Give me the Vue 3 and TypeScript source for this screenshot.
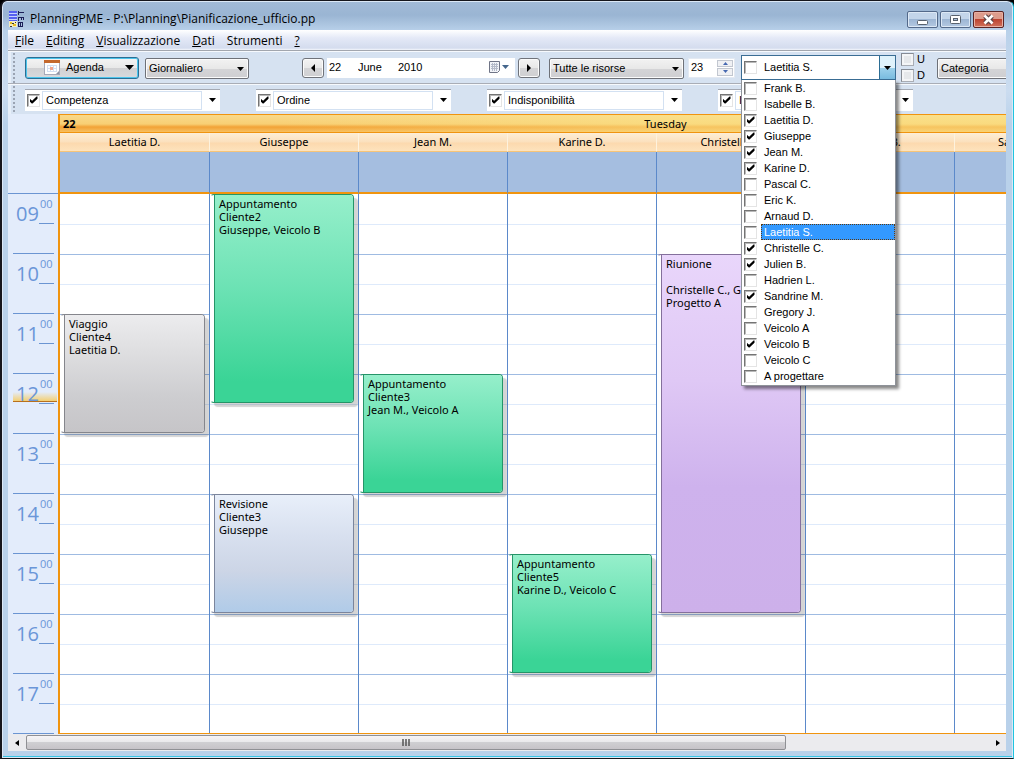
<script setup lang="ts">
import { ref } from 'vue'

interface Resource { name: string; checked: boolean }
interface Appointment { resource: string; start: number; end: number; tone: string; lines: string[] }

const FIRST_HOUR = 9
const hours = ['09', '10', '11', '12', '13', '14', '15', '16', '17']

const menus = [
  { key: 'F', rest: 'ile' },
  { key: 'E', rest: 'diting' },
  { key: 'V', rest: 'isualizzazione' },
  { key: 'D', rest: 'ati' },
  { key: '', rest: 'Strumenti' },
  { key: '?', rest: '' },
]

const filters = ref([
  { id: 'skill', name: 'Competenza', on: true },
  { id: 'order', name: 'Ordine', on: true },
  { id: 'absence', name: 'Indisponibilità', on: true },
  { id: 'label', name: 'Intestazione', on: true },
])

const resources = ref<Resource[]>([
  { name: 'Frank B.', checked: false },
  { name: 'Isabelle B.', checked: false },
  { name: 'Laetitia D.', checked: true },
  { name: 'Giuseppe', checked: true },
  { name: 'Jean M.', checked: true },
  { name: 'Karine D.', checked: true },
  { name: 'Pascal C.', checked: false },
  { name: 'Eric K.', checked: false },
  { name: 'Arnaud D.', checked: false },
  { name: 'Laetitia S.', checked: false },
  { name: 'Christelle C.', checked: true },
  { name: 'Julien B.', checked: true },
  { name: 'Hadrien L.', checked: false },
  { name: 'Sandrine M.', checked: true },
  { name: 'Gregory J.', checked: false },
  { name: 'Veicolo A', checked: false },
  { name: 'Veicolo B', checked: true },
  { name: 'Veicolo C', checked: false },
  { name: 'A progettare', checked: false },
])
const current = ref('Laetitia S.')
const open = ref(true)

const columns = ['Laetitia D.', 'Giuseppe', 'Jean M.', 'Karine D.', 'Christelle C.', 'Julien B.', 'Sandrine M.', 'Veicolo B']

const appointments: Appointment[] = [
  { resource: 'Laetitia D.', start: 11, end: 13, tone: 'grey', lines: ['Viaggio', 'Cliente4', 'Laetitia D.'] },
  { resource: 'Giuseppe', start: 9, end: 12.5, tone: 'green', lines: ['Appuntamento', 'Cliente2', 'Giuseppe, Veicolo B'] },
  { resource: 'Giuseppe', start: 14, end: 16, tone: 'blue', lines: ['Revisione', 'Cliente3', 'Giuseppe'] },
  { resource: 'Jean M.', start: 12, end: 14, tone: 'green', lines: ['Appuntamento', 'Cliente3', 'Jean M., Veicolo A'] },
  { resource: 'Karine D.', start: 15, end: 17, tone: 'green', lines: ['Appuntamento', 'Cliente5', 'Karine D., Veicolo C'] },
  { resource: 'Christelle C.', start: 10, end: 16, tone: 'violet', lines: ['Riunione', '', 'Christelle C., Giuseppe', 'Progetto A'] },
]

const forResource = (name: string) => appointments.filter((a) => a.resource === name)
const rowSpan = (a: Appointment) => ({
  gridRow: `${(a.start - FIRST_HOUR) * 2 + 1} / ${(a.end - FIRST_HOUR) * 2 + 1}`,
})
</script>

<template>
  <div class="window">
    <header class="title-bar">
      <svg class="app-icon" width="16" height="17" viewBox="0 0 16 17" aria-hidden="true">
        <rect x="0" y="0" width="8" height="10" fill="#5560f0" />
        <path d="M0 2.5h8M0 5.5h8M0 8.5h8" stroke="#c8d4ff" />
        <rect x="0" y="10" width="8" height="6" fill="#f4ecc0" />
        <path d="M1 11h2v2H1zM4 13h3v2H4z" fill="#e8c020" />
        <path d="M3 12h2v1H3zM1 15h2v1H1zM6 11h1v1H6z" fill="#333" />
        <path d="M9.5 0v4M9 1.5h6M9.5 6v4M9 6.5h5M14.5 6v3M12.500 6v3M9 11.500h5M9.500 11v5M11.500 11v5M13.500 11v5M9 15.500h5" fill="none" stroke="#1c1f58" />
      </svg>
      <h1>PlanningPME - P:\Planning\Pianificazione_ufficio.pp</h1>
      <div class="window-buttons">
        <button type="button" aria-label="Riduci">
          <svg width="29" height="15" viewBox="0 0 29 15"><rect x="9.500" y="8.500" width="10" height="4" rx="1" fill="#fff" stroke="#59626e" /></svg>
        </button>
        <button type="button" aria-label="Ingrandisci">
          <svg width="29" height="15" viewBox="0 0 29 15"><rect x="9.500" y="3.500" width="10" height="8" rx="1" fill="#fff" stroke="#59626e" /><rect x="12.500" y="6.500" width="4" height="2" fill="#a9c0dc" stroke="#59626e" /></svg>
        </button>
        <button type="button" class="close" aria-label="Chiudi">
          <svg width="29" height="15" viewBox="0 0 29 15"><path d="M11 4l7 7M18 4l-7 7" stroke="#5b4548" stroke-width="5" /><path d="M10.500 3.500l8 8M18.500 3.500l-8 8" stroke="#fff" stroke-width="2.500" /></svg>
        </button>
      </div>
    </header>

    <div class="client">
      <nav class="menu-bar">
        <a v-for="m in menus" :key="m.key + m.rest" href="#"><u>{{ m.key }}</u>{{ m.rest }}</a>
      </nav>

      <div class="toolbar">
        <span class="grip"></span>
        <button type="button" class="agenda">
          <svg width="16" height="15" viewBox="0 0 16 15" aria-hidden="true">
            <rect x=".5" y=".5" width="15" height="14" fill="#fff" stroke="#a7a9b8" />
            <rect x="0" y="0" width="16" height="3" fill="#c4682c" />
            <path d="M3.500 5v7M6.500 5v7M9.500 5v7M12.500 5v7M3 5.500h10M3 8.500h10M3 11.500h10" stroke="#d3dff2" />
            <rect x="6" y="7" width="3" height="3" fill="#f3a48c" />
            <path d="M12 14l3-3v3z" fill="#8f93a3" />
          </svg>
          <span>Agenda</span>
          <svg class="wide-arrow" width="9" height="5" viewBox="0 0 9 5" aria-hidden="true"><path d="M0 0h9L4.500 5z" /></svg>
        </button>
        <div class="drop period">
          <select aria-label="Periodo"><option>Giornaliero</option></select>
          <svg width="7" height="4" viewBox="0 0 7 4" aria-hidden="true"><path d="M0 0h7L3.500 4z" /></svg>
        </div>
        <div class="date-nav">
          <button type="button" class="step" aria-label="Giorno precedente">
            <svg width="4" height="8" viewBox="0 0 4 8"><path d="M4 0v8L0 4z" /></svg>
          </button>
          <div class="date-field">
            <input class="day" aria-label="Giorno" value="22" />
            <input class="month" aria-label="Mese" value="June" />
            <input class="year" aria-label="Anno" value="2010" />
            <button type="button" aria-label="Apri calendario">
              <svg width="20" height="13" viewBox="0 0 20 13">
                <path d="M.5 .5h10v9l-2 2h-8z" fill="#f1f3f8" stroke="#6f7486" />
                <path d="M2 3.500h7M2 5.500h7M2 7.500h7M3.500 2v8M5.500 2v8M7.500 2v8" stroke="#b4bac9" />
                <path d="M13 4h7l-3.500 4z" fill="#44668c" />
              </svg>
            </button>
          </div>
          <button type="button" class="step" aria-label="Giorno successivo">
            <svg width="4" height="8" viewBox="0 0 4 8"><path d="M0 0v8l4-4z" /></svg>
          </button>
        </div>
        <div class="drop scope">
          <select aria-label="Risorse"><option>Tutte le risorse</option></select>
          <svg width="7" height="4" viewBox="0 0 7 4" aria-hidden="true"><path d="M0 0h7L3.500 4z" /></svg>
        </div>
        <div class="spinner">
          <input aria-label="Numero" value="23" />
          <span>
            <button type="button" aria-label="Aumenta"><svg width="5" height="3" viewBox="0 0 5 3"><path d="M0 3h5L2.500 0z" /></svg></button>
            <button type="button" aria-label="Diminuisci"><svg width="5" height="3" viewBox="0 0 5 3"><path d="M0 0h5L2.500 3z" /></svg></button>
          </span>
        </div>
        <div class="combo">
          <input type="checkbox" class="tick" aria-label="Seleziona risorsa" />
          <input type="text" class="combo-text" aria-label="Risorsa" :value="current" />
          <button type="button" aria-label="Elenco risorse" @click="open = !open">
            <svg width="7" height="4" viewBox="0 0 7 4"><path d="M0 0h7L3.500 4z" /></svg>
          </button>
          <ul v-if="open" class="resource-list">
            <li v-for="r in resources" :key="r.name">
              <label :class="{ active: r.name === current }">
                <input v-model="r.checked" type="checkbox" class="tick" />
                <span>{{ r.name }}</span>
              </label>
            </li>
          </ul>
        </div>
        <div class="flags">
          <label><input type="checkbox" class="tick dim" />U</label>
          <label><input type="checkbox" class="tick dim" />D</label>
        </div>
        <div class="drop category">
          <select aria-label="Categoria"><option>Categoria</option></select>
        </div>
      </div>

      <div class="toolbar filters">
        <span class="grip"></span>
        <div class="filter-set">
          <div v-for="f in filters" :key="f.id" class="filter">
            <input v-model="f.on" type="checkbox" class="tick" :aria-label="'Attiva ' + f.name" />
            <input type="text" :aria-label="f.name" :value="f.name" />
            <button type="button" :aria-label="'Apri ' + f.name">
              <svg width="7" height="4" viewBox="0 0 7 4"><path d="M0 0h7L3.500 4z" /></svg>
            </button>
          </div>
        </div>
      </div>

      <main class="calendar">
        <div class="gutter">
          <div class="gutter-head"></div>
          <div class="hours">
            <i class="now"></i>
            <div v-for="h in hours" :key="h" class="hour"><span>{{ h }}</span><sup>00</sup></div>
          </div>
        </div>
        <div class="board">
          <div class="day-head"><b>22</b><span>Tuesday</span></div>
          <div class="columns">
            <section v-for="c in columns" :key="c" class="column">
              <h2>{{ c }}</h2>
              <div class="all-day"></div>
              <div class="slots">
                <article v-for="a in forResource(c)" :key="a.start" class="appointment" :class="a.tone" :style="rowSpan(a)">
                  <div class="body">
                    <p v-for="(l, i) in a.lines" :key="i">{{ l }}</p>
                  </div>
                </article>
              </div>
            </section>
          </div>
        </div>
      </main>

      <div class="scrollbar">
        <button type="button" aria-label="Scorri a sinistra"><svg width="4" height="6" viewBox="0 0 4 6"><path d="M4 0v6L0 3z" /></svg></button>
        <div class="track">
          <div class="thumb"><svg width="8" height="7" viewBox="0 0 8 7"><path d="M1 0v7M4 0v7M7 0v7" stroke="#555" stroke-width="1.500" /></svg></div>
        </div>
        <button type="button" aria-label="Scorri a destra"><svg width="4" height="6" viewBox="0 0 4 6"><path d="M0 0v6l4-3z" /></svg></button>
      </div>
    </div>
  </div>
</template>

<style>
html, body { background: #000; }
</style>

<style scoped>
* { box-sizing: border-box; }
button, input, select { font: inherit; color: inherit; margin: 0; padding: 0; border: 0; background: none; border-radius: 0; outline: 0; }
button { display: flex; align-items: center; justify-content: center; }
svg { display: block; flex: none; }
h1, h2, p, ul { margin: 0; padding: 0; font-weight: normal; list-style: none; }

.window {
  min-height: 100vh;
  padding: 1px 7px 7px 6px;
  border: 1px solid #16161c;
  border-right-color: #20c4e0;
  border-left-width: 2px;
  border-radius: 7px 7px 0 0;
  background: linear-gradient(#a3bbd8, #9ab5d3 14px, #b9d1ea 30px, #cbdcf0 90px, #b9d1ea 124px);
  box-shadow: inset 0 0 0 1px #dce8f6, inset 0 -2px 0 #38c4e4;
  font: 11px/13px "Liberation Sans", Arial, sans-serif;
  color: #000;
  overflow: hidden;
}
.title-bar { display: flex; height: 28px; align-items: center; padding: 6px 2px 0 1px; font-family: "Open Sans", "Noto Sans", sans-serif; }
.title-bar h1 { flex: 1; margin-left: 5px; font-size: 12px; line-height: 18px; white-space: nowrap; }
.window-buttons { display: flex; gap: 2px; }
.window-buttons button { width: 31px; height: 17px; border: 1px solid #53698a; border-radius: 2px; background: linear-gradient(#c3d5ea 45%, #9db6d4 50%, #b4c9e2); box-shadow: inset 0 0 0 1px #dce8f5; }
.window-buttons .close { border-color: #5a2424; background: linear-gradient(#dd9c8c 45%, #bd4431 50%, #d0725c); box-shadow: inset 0 0 0 1px #e8b0a4; }

.client { background: #d6e2f1; overflow: hidden; }
.menu-bar { display: flex; gap: 12px; height: 21px; padding: 1px 7px; border-bottom: 1px solid #a2a6ae; background: linear-gradient(#fff, #e4e9f7 8px, #d4dcee 18px, #f4f7fc); font: 12px/19px "Open Sans", "Noto Sans", sans-serif; }
.menu-bar a { color: #000; text-decoration: none; }

.toolbar { position: relative; z-index: 2; display: flex; align-items: center; height: 33px; padding-top: 1px; border-bottom: 1px solid #a9adb6; background: #d6e2f1; box-shadow: inset 0 1px #f6f9fd; }
.filters { z-index: 1; height: 30px; border-bottom: 0; }
.grip { flex: none; align-self: stretch; width: 10px; margin-right: 7px; border-left: 3px solid #e7eff9; background: radial-gradient(circle at 2px 2px, #9aa3b2 1px, #d6e2f1 1px) 1px 0 / 4px 4px repeat-y; }

.agenda { width: 114px; height: 22px; flex: none; justify-content: flex-start; padding: 0 4px 0 18px; border: 1px solid #2b6f94; border-radius: 3px; background: linear-gradient(#f4f4f4, #e8e8e8 50%, #d0d0d2 50%, #d8dade); box-shadow: inset 0 0 0 1px #4cc4ec; }
.agenda span { flex: 1; margin-left: 6px; text-align: left; }
.drop { position: relative; flex: none; }
.drop select { appearance: none; display: block; width: 100%; height: 21px; padding: 0 3px; border: 1px solid #6e7178; border-radius: 2px; background: linear-gradient(#f2f2f2, #e8e8e8 50%, #d4d4d6 50%, #cfcfd2); box-shadow: inset 0 0 0 1px #fbfbfb; }
.drop svg { position: absolute; right: 5px; top: 9px; pointer-events: none; }
.period { width: 104px; margin: 1px 0 0 6px; }
.scope { width: 135px; margin: 1px 0 0 9px; }
.category { width: 104px; margin: 1px 0 0 6px; }

.date-nav { display: flex; gap: 3px; margin-left: 53px; }
.step { width: 22px; height: 20px; border: 1px solid #70737a; border-radius: 3px; background: linear-gradient(#f3f3f3, #e8e8e8 50%, #d4d4d6 50%, #d0d0d3); box-shadow: inset 0 0 0 1px #fbfbfb; }
.date-field { display: flex; align-items: center; width: 188px; height: 20px; padding: 0 6px 0 2px; background: #fff; }
.date-field .day { width: 29px; }
.date-field .month { width: 40px; }
.date-field .year { flex: 1; min-width: 0; }

.spinner { display: flex; width: 47px; height: 20px; flex: none; margin-left: 4px; padding: 1px; background: #fff; border: 1px solid #e3e9f2; }
.spinner input { flex: 1; min-width: 0; padding-left: 1px; }
.spinner span { display: grid; width: 16px; gap: 1px; }
.spinner button { border: 1px solid #c2c7d0; background: #f0f1f4; }
.spinner svg { fill: #4668b0; }

.tick { appearance: none; flex: none; width: 13px; height: 13px; border: 1px solid; border-color: #747474 #e4e4e4 #e4e4e4 #747474; background: #fff; box-shadow: inset 1px 1px #b8b8b8; }
.tick:checked { display: grid; place-items: center; }
.tick:checked::before { content: ""; width: 8px; height: 8px; background: #000; clip-path: polygon(0 30%, 33% 60%, 88% 5%, 100% 5%, 100% 35%, 38% 95%, 28% 95%, 0 65%); }
.tick.dim { border-color: #868b94 #a9adb5 #a9adb5 #868b94; background: #e6e8eb; box-shadow: inset 0 0 0 2px #f4f5f7; }

.combo { position: relative; display: flex; align-items: center; width: 155px; height: 25px; flex: none; margin-left: 6px; padding-left: 2px; border: 1px solid #3a6d94; background: #fff; }
.combo-text { flex: 1; min-width: 0; margin-left: 7px; }
.combo > button { align-self: stretch; width: 16px; border-left: 1px solid #2b6d94; background: linear-gradient(#dff2fb 50%, #9fd2ec 50%, #78bbdf); }
.resource-list { position: absolute; z-index: 5; left: -1px; right: -1px; top: 24px; padding-bottom: 1px; border: 1px solid #8e9299; border-top: 0; background: #fff; box-shadow: 3px 3px 3px #0007; }
.resource-list label { display: flex; align-items: center; height: 16px; padding-left: 2px; }
.resource-list span { flex: 1; margin-left: 4px; padding: 0 2px; border: 1px solid #fff; line-height: 14px; }
.resource-list .active span { border: 1px dotted #5c3a14; background: #3399ff; color: #fff; }

.flags { display: grid; gap: 1px; width: 30px; flex: none; margin-left: 5px; }
.flags label { display: flex; align-items: center; gap: 3px; height: 15px; line-height: 15px; }

.filter-set { display: flex; gap: 36px; }
.filter { display: flex; align-items: center; width: 195px; height: 22px; flex: none; padding: 1px 0 1px 2px; background: #fff; border-top: 1px solid #a4a9b3; }
.filter input[type="text"] { flex: 1; min-width: 0; align-self: stretch; margin-left: 2px; padding-left: 3px; border: 1px solid #d3e1f2; }
.filter button { width: 18px; padding-left: 3px; align-self: stretch; }

.calendar { display: flex; background: #e3ecfb; font-family: "Noto Sans", "Open Sans", sans-serif; }
.gutter { width: 50px; flex: none; }
.gutter-head { height: 79px; }
.hours { position: relative; padding: 0 4px 0 5px; border-top: 1px solid #6b95d2; }
.hour { position: relative; display: flex; height: 60px; padding-left: 3px; color: #6a96d8; border-bottom: 1px solid #6b95d2; background: linear-gradient(#6b95d2, #6b95d2) right 29px / 15px 1px no-repeat; }
.hour span { padding-top: 8px; font: 20px/24px "Open Sans", "Noto Sans", sans-serif; }
.hour sup { padding: 3px 0 0 1px; font: 11px/14px "Open Sans", "Noto Sans", sans-serif; }
.now { position: absolute; left: 5px; right: 1px; top: 198px; height: 10px; border-bottom: 1px solid #b8701c; background: linear-gradient(#f8d88000, #f8c850cc); }

.board { flex: 1; min-width: 0; overflow: hidden; border: solid #f0940f; border-width: 1px 0 1px 2px; background: #fff; }
.day-head { display: grid; grid-template-columns: 1fr auto 1fr; width: 1208px; height: 18px; padding-left: 3px; line-height: 17px; border-bottom: 1px solid #f0940f; background: linear-gradient(90deg, #fbe68a00, #fbe68a00 220px, #fbe68a80 600px), linear-gradient(#f9d98a, #f8cf74 9px, #f2a236 12px, #f7c060); }
.columns { display: flex; }
.column { flex: 0 0 149px; }
.column:first-child { flex-basis: 150px; }
.column h2 { height: 19px; border-right: 1px solid #fdf2de; border-bottom: 1px solid #f6c478; background: linear-gradient(#fdeed6, #fbe0bd 9px, #fcd9ae 10px, #fde3bd); font-size: 11px; line-height: 18px; text-align: center; }
.all-day { height: 42px; border-right: 1px solid #5b89ca; border-bottom: 2px solid #f0940f; background: #a5bee0; }
.slots {
  display: grid;
  grid-template-rows: repeat(18, 30px);
  margin-bottom: -1px;
  padding-right: 4px;
  border-right: 1px solid #5b89ca;
  background:
    linear-gradient(#fff, #fff) 0 0 / 100% 1px no-repeat,
    linear-gradient(#9fbbe2 0 1px, #fff 1px 30px, #deeafb 30px 31px, #fff 31px 60px) 0 0 / 100% 60px;
}

.appointment { margin: 0 0 1px; padding-left: 3px; border: 1px solid var(--edge); border-left-color: #fff; border-radius: 4px; background: #fff; box-shadow: 4px 4px 1px #0000002b; }
.body { height: 100%; padding: 2px 4px; border-left: 1px solid var(--edge); border-radius: 0 3px 3px 0; line-height: 13px; overflow: hidden; white-space: nowrap; }
.body p { min-height: 13px; }
.green { --edge: #259468; }
.green .body { background: linear-gradient(#96efcb, #6ce2b4 45%, #3ad496 90%); }
.grey { --edge: #85868c; }
.grey .body { background: linear-gradient(#ececee, #dfdfe1 30%, #cdcdd0 70%, #c6c5c8); }
.blue { --edge: #7b859c; }
.blue .body { background: linear-gradient(#e8effa, #d8e0ef 35%, #ccd5e6 65%, #b0cbe8); }
.violet { --edge: #84709c; }
.violet .body { background: linear-gradient(#e9d6fb, #dfc8f5 35%, #ceb2ed 65%, #cdb0ea); }

.scrollbar { display: flex; height: 17px; background: #ebebee; }
.scrollbar > button { width: 17px; }
.track { flex: 1; display: flex; padding: 1px; }
.thumb { display: flex; width: 79%; align-items: center; justify-content: center; border: 1px solid #8f9094; border-radius: 2px; background: linear-gradient(#f6f4f6, #e8e8ea 50%, #cfcfd2 50%, #c6c3c8); }
</style>
